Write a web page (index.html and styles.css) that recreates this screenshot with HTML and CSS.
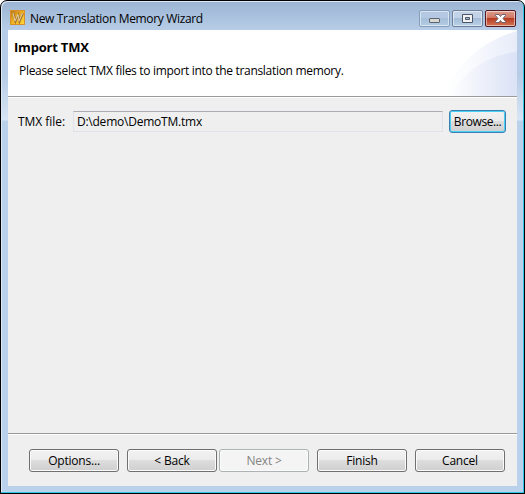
FILE: index.html
```html
<!DOCTYPE html>
<html lang="en">
<head>
<meta charset="utf-8">
<title>New Translation Memory Wizard</title>
<link rel="stylesheet" href="styles.css">
</head>
<body>
<main class="window">
  <header class="titlebar">
    <svg class="app-icon" width="16" height="16" viewBox="0 0 16 16">
      <defs><linearGradient id="gold" x1="0" y1="0" x2="1" y2="1"><stop offset="0" stop-color="#b8731c"/><stop offset=".5" stop-color="#f0b222"/><stop offset="1" stop-color="#ffdb3a"/></linearGradient></defs>
      <rect x=".5" y=".5" width="14" height="14" fill="url(#gold)" stroke="#d99127"/>
      <path d="M3.500 3 5.500 11.500 8.500 5 9.500 11.500 13 3" fill="none" stroke="#a87430" stroke-width="2"/>
      <path d="M3 3 5 11 8 4.500 9 11 12.500 3" fill="none" stroke="#e6d3a0" stroke-width="1"/>
    </svg>
    <h1 class="title">New Translation Memory Wizard</h1>
    <div class="controls">
      <span class="ctl ctl-min"><svg width="29" height="15"><rect x="9.500" y="7.500" width="10" height="4" rx=".5" fill="#d8d8d4" stroke="#5c6470"/></svg></span>
      <span class="ctl ctl-max"><svg width="29" height="15"><path d="M9.500 3.500h10v8h-10zM12.500 6.500v2h4v-2z" fill="#f2f2f2" fill-rule="evenodd" stroke="#4c5468"/></svg></span>
      <span class="ctl ctl-close"><svg width="29" height="15"><path d="M9.500 3.500h3.500l1.500 2 1.500-2h3.500v1l-2.500 3 2.500 3v1H16l-1.500-2-1.500 2H9.500v-1l2.500-3-2.500-3z" fill="#fff" stroke="#6d6370"/></svg></span>
    </div>
  </header>
  <section class="client">
    <div class="banner">
      <svg class="banner-art" width="75" height="66" viewBox="0 0 75 66">
        <defs>
          <linearGradient id="outer"><stop offset="0" stop-color="#fff"/><stop offset=".3" stop-color="#fbfcfe"/><stop offset="1" stop-color="#e7ecf9"/></linearGradient>
          <linearGradient id="inner"><stop offset="0" stop-color="#fff"/><stop offset=".3" stop-color="#f4f6fc"/><stop offset="1" stop-color="#dbe2f6"/></linearGradient>
        </defs>
        <path d="M1 66C15 34 38 12 75 1V66Z" fill="url(#outer)"/>
        <path d="M7 66C24 40 46 25 75 22V66Z" fill="url(#inner)"/>
      </svg>
      <h2 class="heading">Import TMX</h2>
      <p class="desc">Please select TMX files to import into the translation memory.</p>
    </div>
    <div class="content">
      <label class="file-label">TMX file:</label>
      <div class="file-field"><span class="file-value">D:\demo\DemoTM.tmx</span></div>
      <button class="btn btn-focus">Browse...</button>
    </div>
    <footer class="actions">
      <button class="btn">Options...</button>
      <button class="btn btn-back">&lt; Back</button>
      <button class="btn btn-next" disabled>Next &gt;</button>
      <button class="btn btn-finish">Finish</button>
      <button class="btn btn-cancel">Cancel</button>
    </footer>
  </section>
</main>
</body>
</html>
```
FILE: styles.css
```css
* { box-sizing: border-box; }
body {
  margin: 0;
  background: linear-gradient(#fff 50%, #000 50%) 0 0 / 525px 494px no-repeat;
  font: 12px/16px "Open Sans", "Noto Sans", sans-serif;
  color: #000;
}
.window {
  width: 525px;
  height: 494px;
  padding: 0 7px 7px;
  border: 1px solid #000;
  border-radius: 7px 7px 0 0;
  background: linear-gradient(#9ab4d3 0, #b7cde7 29px, #b7cde7 75px, #d7e5f4 119px, #b9d1ea 120px);
  box-shadow: inset -1px -1px #2fc6e8, inset 1px 1px #dce8f5;
}
.titlebar {
  display: flex;
  height: 29px;
  padding: 9px 1px 0 2px;
}
.app-icon { flex: none; }
.title {
  margin: 1px 0 0 4px;
  font-size: 12px;
  font-weight: 400;
  line-height: 16px;
  letter-spacing: -0.34px;
  white-space: nowrap;
}
.controls {
  display: flex;
  gap: 2px;
  height: 17px;
  margin-left: auto;
}
.ctl {
  width: 31px;
  height: 17px;
  border: 1px solid #6d7f98;
  border-radius: 2px;
  box-shadow: inset 0 0 0 1px #ffffff80;
  background: linear-gradient(#c3d3e7 50%, #a4bcd7 50%, #b9d0e8);
}
.ctl svg { display: block; }
.ctl-min {
  border-color: #859ebb;
  background: linear-gradient(#b4c9e1 50%, #a6bfda 50%, #b4cbe4);
}
.ctl-close {
  border-color: #561820;
  background: linear-gradient(#dc9d8d, #cf7560 48%, #b83c22 50%, #d17354);
}
.client {
  display: flex;
  flex-direction: column;
  height: 456px;
  background: #efefef;
}
.banner {
  position: relative;
  height: 67px;
  padding: 8px 6px 0;
  background: #fff;
  border-bottom: 1px solid #9a9a9a;
}
.banner-art { position: absolute; right: 0; top: 0; }
.heading {
  margin: 0;
  font-size: 13px;
  line-height: 18px;
  font-weight: 700;
  letter-spacing: -0.2px;
}
.desc {
  margin: 7px 0 0 5px;
  letter-spacing: -0.31px;
  white-space: nowrap;
}
.content {
  display: flex;
  flex: 1;
  align-items: flex-start;
  padding: 12px 11px 0 10px;
  border-top: 1px solid #fff;
}
.file-label { width: 54px; margin-top: 4px; letter-spacing: -0.05px; }
.file-field {
  width: 371px;
  height: 21px;
  margin: 1px 6px 0 1px;
  padding: 2px 3px;
  border: 1px solid #dfe2e8;
  border-top-color: #abadb3;
}
.file-value { letter-spacing: -0.22px; }
.btn {
  width: 90px;
  height: 23px;
  padding: 0;
  border: 1px solid #707070;
  border-radius: 3px;
  background: linear-gradient(#f2f2f2, #ebebeb 48%, #dddddd 50%, #cfcfcf);
  box-shadow: inset 0 0 0 1px #fafafa;
  font: inherit;
  letter-spacing: -0.2px;
  color: #000;
  white-space: nowrap;
}
.btn:disabled {
  border-color: #adb2b5;
  background: #f4f4f4;
  color: #838383;
}
.btn-focus {
  width: 57px;
  border-color: #3c7fb1;
  box-shadow: inset 0 0 0 1px #48d0f7;
  letter-spacing: -0.4px;
}
.actions {
  display: flex;
  height: 53px;
  padding: 15px 0 0 21px;
  border-top: 1px solid #9a9a9a;
  box-shadow: inset 0 1px #fff;
}
.btn-back { margin-left: 8px; }
.btn-next { margin-left: 2px; }
.btn-finish, .btn-cancel { margin-left: 8px; }
```
